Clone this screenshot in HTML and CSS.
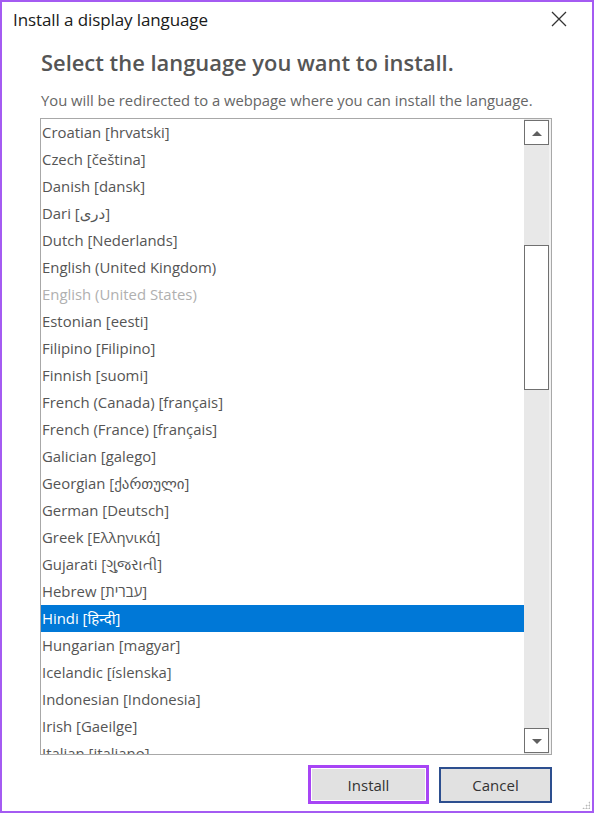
FILE: index.html
```html
<!DOCTYPE html>
<html lang="en">
<head>
<meta charset="utf-8">
<title>Install a display language</title>
<link rel="stylesheet" href="styles.css">
</head>
<body>
<div class="window">
  <div class="titlebar">
    <span class="title">Install a display language</span>
    <span class="close">
      <svg width="16" height="16" viewBox="0 0 16 16"><path d="M1 1 L15 15 M15 1 L1 15" stroke="#333" stroke-width="1.3" fill="none"/></svg>
    </span>
  </div>
  <div class="content">
    <h1 class="heading">Select the language you want to install.</h1>
    <p class="sub">You will be redirected to a webpage where you can install the language.</p>
    <div class="listbox">
      <ul class="items">
        <li>Croatian [hrvatski]</li>
        <li>Czech [čeština]</li>
        <li>Danish [dansk]</li>
        <li>Dari [دری]</li>
        <li>Dutch [Nederlands]</li>
        <li>English (United Kingdom)</li>
        <li class="disabled">English (United States)</li>
        <li>Estonian [eesti]</li>
        <li>Filipino [Filipino]</li>
        <li>Finnish [suomi]</li>
        <li>French (Canada) [français]</li>
        <li>French (France) [français]</li>
        <li>Galician [galego]</li>
        <li>Georgian [ქართული]</li>
        <li>German [Deutsch]</li>
        <li>Greek [Ελληνικά]</li>
        <li>Gujarati [ગુજરાતી]</li>
        <li>Hebrew [עברית]</li>
        <li class="selected">Hindi [हिन्दी]</li>
        <li>Hungarian [magyar]</li>
        <li>Icelandic [íslenska]</li>
        <li>Indonesian [Indonesia]</li>
        <li>Irish [Gaeilge]</li>
        <li>Italian [italiano]</li>
      </ul>
      <div class="scrollbar">
        <div class="sbtn"><svg width="12" height="8" viewBox="0 0 12 8"><path d="M1 7 L6 2 L11 7 Z" fill="#606060"/></svg></div>
        <div class="track upper"></div>
        <div class="thumb"></div>
        <div class="track lower"></div>
        <div class="sbtn"><svg width="12" height="8" viewBox="0 0 12 8"><path d="M1 2 L6 7 L11 2 Z" fill="#606060"/></svg></div>
      </div>
    </div>
    <div class="footer">
      <button class="btn install">Install</button>
      <button class="btn cancel">Cancel</button>
    </div>
  </div>
  <div class="grip"></div>
</div>
</body>
</html>
```
FILE: styles.css
```css
* { box-sizing: border-box; }
html, body { margin: 0; padding: 0; background: #ffffff; }
.window {
  position: relative;
  width: 594px;
  height: 813px;
  border: 2px solid #a45bf2;
  background: #ffffff;
  font-family: "Open Sans", "Noto Sans", "DejaVu Sans", sans-serif;
  display: flex;
  flex-direction: column;
}
.titlebar {
  height: 34px;
  display: flex;
  align-items: center;
  justify-content: space-between;
  padding: 0 25px 0 11px;
}
.title {
  font-size: 17px;
  color: #1a1a1a;
  letter-spacing: -0.1px;
}
.close { display: flex; }
.content {
  flex: 1;
  display: flex;
  flex-direction: column;
  padding: 0 40px 0 38px;
}
.heading {
  margin: 12px 0 0 1px;
  font-size: 21.9px;
  line-height: 30px;
  font-weight: 600;
  color: #555555;
}
.sub {
  margin: 12px 0 0 1px;
  font-size: 14.8px;
  line-height: 20px;
  color: #666666;
  white-space: nowrap;
}
.listbox {
  margin-top: 8px;
  height: 637px;
  border: 1px solid #a8a8a8;
  display: flex;
  overflow: hidden;
}
.items {
  flex: 1;
  list-style: none;
  margin: 0;
  padding: 0;
}
.items li {
  height: 27px;
  line-height: 27px;
  padding-left: 1px;
  font-size: 14.9px;
  color: #555555;
  white-space: nowrap;
}
.items li.disabled { color: #b0b0b0; }
.items li.selected { background: #0078d7; color: #ffffff; }
.scrollbar {
  width: 27px;
  display: flex;
  flex-direction: column;
  background: #e8e8e8;
  border-right: 2px solid #f2f2f2;
}
.sbtn {
  height: 25px;
  background: #ffffff;
  border: 1px solid #707070;
  display: flex;
  align-items: center;
  justify-content: center;
  margin: 1px 0 1px 0;
}
.track.upper { height: 99px; }
.thumb {
  height: 145px;
  background: #ffffff;
  border: 1px solid #707070;
}
.track.lower { flex: 1; }
.footer {
  display: flex;
  justify-content: flex-end;
  gap: 10px;
  margin-top: 10px;
}
.btn {
  font-family: inherit;
  font-size: 15px;
  color: #333333;
  background: #e1e1e1;
  cursor: default;
}
.install {
  width: 121px;
  height: 39px;
  border: 3px solid #a745f5;
  box-shadow: inset 0 0 0 1px #ffffff;
}
.cancel {
  width: 113px;
  height: 36px;
  margin-top: 2px;
  border: 2px solid #2d4f8f;
}
.grip {
  position: absolute;
  right: 2px;
  bottom: 2px;
  width: 8px;
  height: 8px;
  background-image: radial-gradient(circle, #b8b8b8 0.8px, transparent 1.2px);
  background-size: 3px 3px;
  clip-path: polygon(100% 0, 100% 100%, 0 100%);
}
```
